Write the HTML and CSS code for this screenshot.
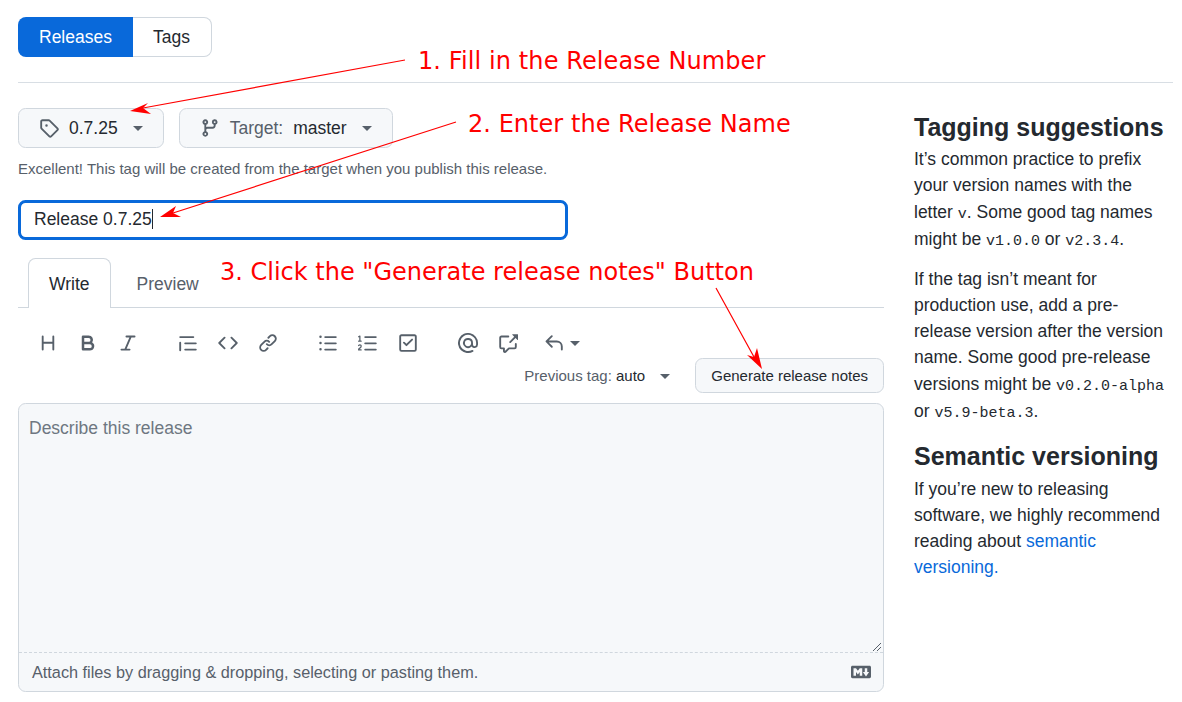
FILE: index.html
```html
<!DOCTYPE html>
<html lang="en">
<head>
    <meta charset="UTF-8">
    <title>New release</title>
    <link rel="stylesheet" href="styles.css">
</head>
<body>
    <div class="page">
        <div class="subnav">
            <a class="subnav_item selected">Releases</a>
            <a class="subnav_item">Tags</a>
        </div>

        <div class="columns">
            <div class="main">
                <div class="picker_row">
                    <button class="picker">
                        <svg class="icon" viewBox="0 0 16 16"><path d="M1 7.775V2.75C1 1.784 1.784 1 2.75 1h5.025c.464 0 .91.184 1.238.513l6.25 6.25a1.75 1.75 0 0 1 0 2.474l-5.026 5.026a1.75 1.75 0 0 1-2.474 0l-6.25-6.25A1.752 1.752 0 0 1 1 7.775Zm1.5 0c0 .066.026.13.073.177l6.25 6.25a.25.25 0 0 0 .354 0l5.025-5.025a.25.25 0 0 0 0-.354l-6.25-6.25a.25.25 0 0 0-.177-.073H2.75a.25.25 0 0 0-.25.25ZM6 5a1 1 0 1 1 0 2 1 1 0 0 1 0-2Z"/></svg>
                        <span>0.7.25</span>
                        <i class="caret"></i>
                    </button>
                    <button class="picker">
                        <svg class="icon" viewBox="0 0 16 16"><path d="M9.5 3.25a2.25 2.25 0 1 1 3 2.122V6A2.5 2.5 0 0 1 10 8.5H6a1 1 0 0 0-1 1v1.128a2.251 2.251 0 1 1-1.5 0V5.372a2.25 2.25 0 1 1 1.5 0v1.836A2.493 2.493 0 0 1 6 7h4a1 1 0 0 0 1-1v-.628A2.25 2.25 0 0 1 9.5 3.25Zm-6 0a.75.75 0 1 0 1.5 0 .75.75 0 0 0-1.5 0Zm8.25-.75a.75.75 0 1 0 0 1.5.75.75 0 0 0 0-1.5ZM4.25 12a.75.75 0 1 0 0 1.5.75.75 0 0 0 0-1.5Z"/></svg>
                        <span class="muted">Target:</span>
                        <span>master</span>
                        <i class="caret"></i>
                    </button>
                </div>
                <div class="note">Excellent! This tag will be created from the target when you publish this release.</div>

                <div class="title_input">Release 0.7.25<span class="cursor"></span></div>

                <div class="tabs">
                    <a class="tab selected">Write</a>
                    <a class="tab">Preview</a>
                </div>

                <div class="toolbar">
                    <div class="tool_group">
                        <span class="tool"><svg class="icon" viewBox="0 0 16 16"><path d="M3.75 2a.75.75 0 0 1 .75.75V7h7V2.75a.75.75 0 0 1 1.5 0v10.5a.75.75 0 0 1-1.5 0V8.5h-7v4.75a.75.75 0 0 1-1.5 0V2.75A.75.75 0 0 1 3.75 2Z"/></svg></span>
                        <span class="tool"><svg class="icon" viewBox="0 0 16 16"><path d="M4 2h4.5a3.501 3.501 0 0 1 2.852 5.53A3.499 3.499 0 0 1 9.5 14H4a1 1 0 0 1-1-1V3a1 1 0 0 1 1-1Zm1 7v3h4.5a1.5 1.5 0 0 0 0-3Zm3.5-2a1.5 1.5 0 0 0 0-3H5v3Z"/></svg></span>
                        <span class="tool"><svg class="icon" viewBox="0 0 16 16"><path d="M6 2.75A.75.75 0 0 1 6.75 2h6.5a.75.75 0 0 1 0 1.5h-2.505l-3.858 9H9.25a.75.75 0 0 1 0 1.5h-6.5a.75.75 0 0 1 0-1.5h2.505l3.858-9H6.75A.75.75 0 0 1 6 2.75Z"/></svg></span>
                    </div>
                    <div class="tool_group">
                        <span class="tool"><svg class="icon" viewBox="0 0 16 16"><path d="M1.75 2.5h10.5a.75.75 0 0 1 0 1.5H1.75a.75.75 0 0 1 0-1.5Zm4 5h8.5a.75.75 0 0 1 0 1.5h-8.5a.75.75 0 0 1 0-1.5Zm0 5h8.5a.75.75 0 0 1 0 1.5h-8.5a.75.75 0 0 1 0-1.5ZM2.5 7.75v6a.75.75 0 0 1-1.5 0v-6a.75.75 0 0 1 1.5 0Z"/></svg></span>
                        <span class="tool"><svg class="icon" viewBox="0 0 16 16"><path d="m11.28 3.22 4.25 4.25a.75.75 0 0 1 0 1.06l-4.25 4.25a.749.749 0 0 1-1.275-.326.749.749 0 0 1 .215-.734L13.94 8l-3.72-3.72a.749.749 0 0 1 .326-1.275.749.749 0 0 1 .734.215Zm-6.56 0a.751.751 0 0 1 1.042.018.751.751 0 0 1 .018 1.042L2.06 8l3.72 3.72a.749.749 0 0 1-.326 1.275.749.749 0 0 1-.734-.215L.47 8.53a.75.75 0 0 1 0-1.06Z"/></svg></span>
                        <span class="tool"><svg class="icon" viewBox="0 0 16 16"><path d="m7.775 3.275 1.25-1.25a3.5 3.5 0 1 1 4.95 4.95l-2.5 2.5a3.5 3.5 0 0 1-4.95 0 .751.751 0 0 1 .018-1.042.751.751 0 0 1 1.042-.018 1.998 1.998 0 0 0 2.83 0l2.5-2.5a2.002 2.002 0 0 0-2.83-2.83l-1.25 1.25a.751.751 0 0 1-1.042-.018.751.751 0 0 1-.018-1.042Zm-4.69 9.64a1.998 1.998 0 0 0 2.83 0l1.25-1.25a.751.751 0 0 1 1.042.018.751.751 0 0 1 .018 1.042l-1.25 1.25a3.5 3.5 0 1 1-4.95-4.95l2.5-2.5a3.5 3.5 0 0 1 4.95 0 .751.751 0 0 1-.018 1.042.751.751 0 0 1-1.042.018 1.998 1.998 0 0 0-2.83 0l-2.5 2.5a1.998 1.998 0 0 0 0 2.83Z"/></svg></span>
                    </div>
                    <div class="tool_group">
                        <span class="tool"><svg class="icon" viewBox="0 0 16 16"><path d="M5.75 2.5h8.5a.75.75 0 0 1 0 1.5h-8.5a.75.75 0 0 1 0-1.5Zm0 5h8.5a.75.75 0 0 1 0 1.5h-8.5a.75.75 0 0 1 0-1.5Zm0 5h8.5a.75.75 0 0 1 0 1.5h-8.5a.75.75 0 0 1 0-1.5ZM2 14a1 1 0 1 1 0-2 1 1 0 0 1 0 2Zm1-6a1 1 0 1 1-2 0 1 1 0 0 1 2 0ZM2 4a1 1 0 1 1 0-2 1 1 0 0 1 0 2Z"/></svg></span>
                        <span class="tool"><svg class="icon" viewBox="0 0 16 16"><path d="M5 3.25a.75.75 0 0 1 .75-.75h8.5a.75.75 0 0 1 0 1.5h-8.5A.75.75 0 0 1 5 3.25Zm0 5a.75.75 0 0 1 .75-.75h8.5a.75.75 0 0 1 0 1.5h-8.5A.75.75 0 0 1 5 8.25Zm0 5a.75.75 0 0 1 .75-.75h8.5a.75.75 0 0 1 0 1.5h-8.5a.75.75 0 0 1-.75-.75ZM.924 10.32a.5.5 0 0 1-.851-.525l.001-.001.001-.002.002-.004.007-.011c.097-.144.215-.273.348-.384.228-.19.588-.392 1.068-.392.468 0 .858.181 1.126.484.259.294.377.673.377 1.038 0 .987-.686 1.495-1.156 1.845l-.047.035c-.303.225-.522.4-.654.597h1.357a.5.5 0 0 1 0 1H.5a.5.5 0 0 1-.5-.5c0-1.005.692-1.52 1.167-1.875l.035-.025c.531-.396.8-.625.8-1.078a.57.57 0 0 0-.128-.376C1.806 10.068 1.695 10 1.5 10a.658.658 0 0 0-.429.163.835.835 0 0 0-.144.153ZM2.003 2.5V6h.503a.5.5 0 0 1 0 1H.5a.5.5 0 0 1 0-1h.503V3.308l-.28.14a.5.5 0 0 1-.446-.895l1.003-.5a.5.5 0 0 1 .723.447Z"/></svg></span>
                        <span class="tool"><svg class="icon" viewBox="0 0 16 16"><path fill-rule="evenodd" d="M2.75 1h10.5c.966 0 1.75.784 1.75 1.75v10.5A1.75 1.75 0 0 1 13.25 15H2.75A1.75 1.75 0 0 1 1 13.25V2.75C1 1.784 1.784 1 2.75 1Zm0 1.5a.25.25 0 0 0-.25.25v10.5c0 .138.112.25.25.25h10.5a.25.25 0 0 0 .25-.25V2.75a.25.25 0 0 0-.25-.25Zm9.03 3.28-4.5 4.5a.75.75 0 0 1-1.06 0l-2-2a.75.75 0 1 1 1.06-1.06l1.47 1.47 3.97-3.97a.75.75 0 1 1 1.06 1.06Z"/></svg></span>
                    </div>
                    <div class="tool_group">
                        <span class="tool"><svg class="icon" viewBox="0 0 16 16"><path d="M4.75 2.37a6.501 6.501 0 0 0 6.5 11.26.75.75 0 0 1 .75 1.298A7.999 7.999 0 0 1 .989 4.148 8 8 0 0 1 16 7.75v1.5a2.75 2.75 0 0 1-5.072 1.475 3.999 3.999 0 0 1-6.65-4.19A4 4 0 0 1 12 8v1.25a1.25 1.25 0 0 0 2.5 0V7.867a6.5 6.5 0 0 0-9.75-5.496ZM10.5 8a2.5 2.5 0 1 0-5 0 2.5 2.5 0 0 0 5 0Z"/></svg></span>
                        <span class="tool"><svg class="icon" viewBox="0 0 16 16"><path d="M2.75 3.5a.25.25 0 0 0-.25.25v7.5c0 .138.112.25.25.25h2a.75.75 0 0 1 .75.75v2.19l2.72-2.72a.749.749 0 0 1 .53-.22h4.5a.25.25 0 0 0 .25-.25v-2.5a.75.75 0 0 1 1.5 0v2.5A1.75 1.75 0 0 1 13.25 13H9.06l-2.573 2.573A1.458 1.458 0 0 1 4 14.543V13H2.75A1.75 1.75 0 0 1 1 11.25v-7.5C1 2.784 1.784 2 2.75 2h5.5a.75.75 0 0 1 0 1.5ZM16 1.25v4.146a.25.25 0 0 1-.427.177L14.03 4.03l-3.75 3.75a.749.749 0 0 1-1.275-.326.749.749 0 0 1 .215-.734l3.75-3.75-1.543-1.543A.25.25 0 0 1 11.604 1h4.146a.25.25 0 0 1 .25.25Z"/></svg></span>
                    </div>
                    <div class="tool_reply">
                        <svg class="icon" viewBox="0 0 16 16"><path d="M6.78 1.97a.75.75 0 0 1 0 1.06L3.81 6h6.44A4.75 4.75 0 0 1 15 10.75v2.5a.75.75 0 0 1-1.5 0v-2.5a3.25 3.25 0 0 0-3.25-3.25H3.81l2.97 2.97a.749.749 0 0 1-.326 1.275.749.749 0 0 1-.734-.215L1.47 7.28a.75.75 0 0 1 0-1.06l4.25-4.25a.75.75 0 0 1 1.06 0Z"/></svg>
                        <i class="caret"></i>
                    </div>
                </div>

                <div class="notes_row">
                    <span class="prev_tag"><span class="muted">Previous tag:</span> auto</span>
                    <i class="caret"></i>
                    <button class="generate">Generate release notes</button>
                </div>

                <div class="editor">
                    <div class="editor_body">
                        <span class="placeholder">Describe this release</span>
                        <svg class="resizer" viewBox="0 0 10 8"><path d="M1 8 9 0M5 8l4-4" stroke="#57606a" stroke-width="1" fill="none"/></svg>
                    </div>
                    <div class="editor_foot">
                        <span>Attach files by dragging &amp; dropping, selecting or pasting them.</span>
                        <svg class="icon" viewBox="0 0 16 16"><path d="M14.85 3c.63 0 1.15.52 1.14 1.15v7.7c0 .63-.51 1.15-1.15 1.15H1.15C.52 13 0 12.48 0 11.84V4.15C0 3.52.52 3 1.15 3ZM9 11V5H7L5.5 7 4 5H2v6h2V8l1.5 1.92L7 8v3Zm2.99.5L14.5 8H13V5h-2v3H9.5Z"/></svg>
                    </div>
                </div>
            </div>

            <div class="side">
                <h2>Tagging suggestions</h2>
                <p>It’s common practice to prefix your version names with the letter <code>v</code>. Some good tag names might be <code>v1.0.0</code> or <code>v2.3.4</code>.</p>
                <p>If the tag isn’t meant for production use, add a pre-release version after the version name. Some good pre-release versions might be <code>v0.2.0-alpha</code> or <code>v5.9-beta.3</code>.</p>
                <h2>Semantic versioning</h2>
                <p>If you’re new to releasing software, we highly recommend reading about <a class="link">semantic versioning.</a></p>
            </div>
        </div>
    </div>

    <!-- annotations drawn on top of the screenshot -->
    <div class="callout callout_1">1. Fill in the Release Number</div>
    <div class="callout callout_2">2. Enter the Release Name</div>
    <div class="callout callout_3">3. Click the "Generate release notes" Button</div>
    <svg class="arrows" viewBox="0 0 1182 702">
        <path d="M405 60 143 108M456 122 173 213M716 288 754 357" stroke="#f00" stroke-width="1.2" fill="none"/>
        <path d="M130 111 148 103 143 108 151 114Z" fill="#f00"/>
        <path d="M160 217 176 206 173 213 181 217Z" fill="#f00"/>
        <path d="M762 369 747 355 754 357 757 348Z" fill="#f00"/>
    </svg>
</body>
</html>
```

FILE: styles.css
```css
* {
    box-sizing: border-box;
}
body {
    margin: 0;
    background: #fff;
    color: #24292f;
    font-family: "Liberation Sans", Arial, sans-serif;
    font-size: 17.5px;
    line-height: 1.5;
}
.page {
    position: relative;
    padding: 17px 9px 10px 18px;
}
.icon {
    width: 20px;
    height: 20px;
    fill: #57606a;
    flex: none;
}
.muted {
    color: #57606a;
}
.caret {
    display: inline-block;
    width: 0;
    height: 0;
    border-top: 5px solid #57606a;
    border-left: 5px solid transparent;
    border-right: 5px solid transparent;
}

/* releases / tags */
.subnav {
    display: flex;
    height: 66px;
    border-bottom: 1px solid #d8dee4;
    padding-bottom: 25px;
}
.subnav_item {
    display: flex;
    align-items: center;
    padding: 0 21px 0 20px;
    border: 1px solid #d0d7de;
    border-left: 0;
    border-radius: 0 8px 8px 0;
}
.subnav_item.selected {
    padding: 0 21px;
    background: #0969da;
    border: 0;
    border-radius: 8px 0 0 8px;
    color: #fff;
}

.columns {
    display: flex;
    margin-top: 25px;
}
.main {
    width: 866px;
    flex: none;
}
.side {
    margin-left: 30px;
    width: 259px;
}

/* tag + target */
.picker_row {
    display: flex;
    gap: 15px;
}
.picker {
    display: flex;
    align-items: center;
    height: 40px;
    padding: 0 20px;
    background: #f6f8fa;
    border: 1px solid #d0d7de;
    border-radius: 7.5px;
    color: #24292f;
    font: inherit;
}
.picker .icon {
    margin-right: 10px;
}
.picker .muted {
    margin-right: 10px;
}
.picker .caret {
    margin-left: 15px;
}
.note {
    margin-top: 10px;
    font-size: 15px;
    line-height: 22px;
    color: #57606a;
}
.title_input {
    margin-top: 20px;
    width: 550px;
    height: 40px;
    padding: 0 13px;
    border: 3px solid #0969da;
    border-radius: 7.5px;
    line-height: 32px;
}
.cursor {
    display: inline-block;
    height: 20px;
    border-right: 1px solid #24292f;
    vertical-align: -4px;
}

/* write / preview */
.tabs {
    display: flex;
    height: 50px;
    margin-top: 18px;
    padding-left: 10px;
    border-bottom: 1px solid #d0d7de;
}
.tab {
    height: 50px;
    padding: 0 20px;
    margin-right: 5px;
    line-height: 51px;
    color: #57606a;
    border: 1px solid transparent;
    border-bottom: 0;
}
.tab.selected {
    background: #fff;
    color: #24292f;
    border-color: #d0d7de;
    border-radius: 7.5px 7.5px 0 0;
    position: relative;
}
.tab.selected::after {
    content: "";
    position: absolute;
    left: 0;
    right: 0;
    bottom: -1px;
    height: 1px;
    background: #fff;
}
.toolbar {
    display: flex;
    height: 30px;
    margin-top: 20px;
    padding-left: 10px;
}
.tool_group {
    display: flex;
    margin-right: 20px;
}
.tool {
    display: flex;
    align-items: center;
    justify-content: center;
    width: 40px;
    height: 30px;
}
.tool_reply {
    display: flex;
    align-items: center;
    gap: 6px;
    margin-left: -4px;
}
.notes_row {
    display: flex;
    align-items: center;
    justify-content: flex-end;
    height: 35px;
    margin-bottom: 10px;
    font-size: 15px;
}
.prev_tag {
    margin-top: 2px;
    margin-right: 15px;
}
.notes_row .caret {
    margin-top: 2px;
}
.generate {
    height: 35px;
    margin-left: 25px;
    padding: 2px 15px 0;
    background: #f6f8fa;
    border: 1px solid #d0d7de;
    border-radius: 7.5px;
    color: #24292f;
    font: inherit;
}

/* textarea */
.editor {
    height: 289px;
    background: #f6f8fa;
    border: 1px solid #d0d7de;
    border-radius: 7.5px;
}
.editor_body {
    position: relative;
    height: 249px;
    padding: 11px 10px;
    border-bottom: 1px dashed #d0d7de;
}
.placeholder {
    color: #6e7781;
}
.resizer {
    position: absolute;
    right: 1px;
    bottom: 1px;
    width: 10px;
    height: 8px;
}
.editor_foot {
    display: flex;
    align-items: center;
    justify-content: space-between;
    height: 38px;
    padding: 0 12px 0 13px;
    font-size: 16.25px;
    color: #57606a;
}

/* sidebar */
.side h2 {
    margin: 4px 0 3px;
    font-size: 25px;
    line-height: 31px;
}
.side p {
    margin: 0 0 15px;
}
.side p:first-of-type {
    margin-bottom: 12px;
}
.side p + h2 {
    margin: 0 0 4px;
}
code {
    font-family: "Liberation Mono", monospace;
    font-size: 15px;
}
.link {
    color: #0969da;
}

/* annotations */
.callout {
    position: absolute;
    font-family: "DejaVu Sans", sans-serif;
    font-size: 24px;
    line-height: 30px;
    color: #f00;
    white-space: nowrap;
}
.callout_1 {
    left: 418px;
    top: 46px;
    letter-spacing: .1px;
}
.callout_2 {
    left: 468px;
    top: 109px;
    letter-spacing: .04px;
}
.callout_3 {
    left: 220px;
    top: 257px;
}
.arrows {
    position: absolute;
    left: 0;
    top: 0;
    width: 1182px;
    height: 702px;
    pointer-events: none;
}
```
